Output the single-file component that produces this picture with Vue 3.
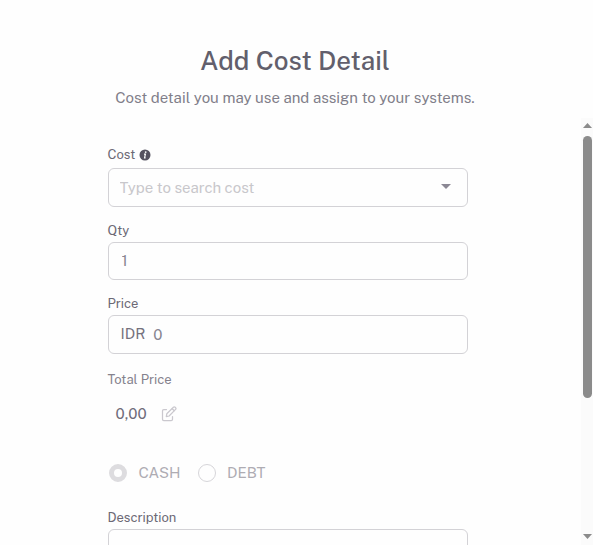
<template>
    <div class="modal">
        <header class="modal-header">
            <h3 class="title">Add Cost Detail</h3>
            <p class="subtitle">Cost detail you may use and assign to your systems.</p>
        </header>

        <div class="modal-body">
            <form class="form" @submit.prevent>
                <label class="label label-cost">
                    <span>Cost</span>
                    <svg class="info" viewBox="0 0 12 12">
                        <circle cx="6" cy="6" r="5.5" fill="#55515f" />
                        <circle cx="6.7" cy="3.1" r="0.9" fill="#fff" />
                        <path d="M5 5.2h1.4L5.6 8.9h1" fill="none" stroke="#fff" stroke-width="1.2" />
                    </svg>
                </label>
                <div class="control select">
                    <input v-model="cost" class="input" type="text" placeholder="Type to search cost" />
                    <svg class="caret" viewBox="0 0 10 5"><path d="M0 0h10L5 5z" fill="#8b8894" /></svg>
                </div>

                <label class="label label-qty">Qty</label>
                <div class="control qty">
                    <input v-model="qty" class="input" type="text" />
                </div>

                <label class="label label-price">Price</label>
                <div class="control price">
                    <span class="currency">IDR</span>
                    <input v-model="price" class="input" type="text" />
                </div>

                <label class="label label-total">Total Price</label>
                <div class="total">
                    <span>0,00</span>
                    <svg class="edit" viewBox="0 0 16 16" fill="none" stroke="#cac8ce" stroke-width="1.25" stroke-linejoin="round" stroke-linecap="round">
                        <path d="M5.5 3.5H2.8Q1.5 3.5 1.5 4.8v8.4q0 1.3 1.3 1.3h7.4q1.3 0 1.3-1.3V10.5" />
                        <path d="M5.3 10.7l.5-2.9 6.6-6.5q.9-.8 1.8 0l.4.4q.8.9 0 1.7L8.1 10z" />
                        <path d="M11.2 2.7l2.1 2" />
                    </svg>
                </div>

                <div class="payment">
                    <label v-for="item in methods" :key="item" class="option">
                        <span class="radio" :class="{ checked: item === method }"></span>
                        <span class="option-text">{{ item }}</span>
                    </label>
                </div>

                <label class="label label-description">Description</label>
                <textarea class="control description"></textarea>
            </form>

            <div class="scrollbar">
                <svg class="arrow" viewBox="0 0 9 5"><path d="M0 5h9L4.5 0z" fill="#8b8b8b" /></svg>
                <div class="thumb"></div>
                <svg class="arrow arrow-down" viewBox="0 0 9 5"><path d="M0 0h9L4.5 5z" fill="#8b8b8b" /></svg>
            </div>
        </div>
    </div>
</template>

<script setup>
import { ref } from 'vue';

const cost = ref('');
const qty = ref('1');
const price = ref('0');
const methods = ['CASH', 'DEBT'];
const method = ref('CASH');
</script>

<style>
body {
    background: #fefefe;
    overflow: hidden;
}
</style>

<style scoped>
* {
    box-sizing: border-box;
}

.modal {
    display: flex;
    flex-direction: column;
    height: 545px;
    overflow: hidden;
    font-family: "Public Sans", Inter, "Liberation Sans", sans-serif;
    font-size: 15px;
    color: #6f6c7a;
}

.modal-header {
    width: 590px;
    height: 118px;
    padding-top: 43px;
    text-align: center;
    flex-shrink: 0;
}

.title {
    margin: 0;
    font-size: 26px;
    font-weight: 500;
    line-height: 36px;
    color: #625f6c;
    white-space: nowrap;
}

.subtitle {
    margin: 8px 0 0;
    line-height: 22px;
    color: #817e8a;
    white-space: nowrap;
}

.modal-body {
    display: flex;
    justify-content: space-between;
    height: 427px;
}

.form {
    display: flex;
    flex-direction: column;
    width: 360px;
    margin-left: 107.5px;
}

.label {
    display: flex;
    align-items: center;
    height: 20px;
    flex-shrink: 0;
    font-size: 13px;
    line-height: 20px;
    color: #6c6975;
}

.label-cost {
    margin-top: 27px;
    margin-bottom: 3px;
    gap: 4px;
}

.info {
    width: 12px;
    height: 12px;
}

.label-qty {
    margin: 14px 0 1px;
}

.label-price {
    margin: 14px 0 1px;
}

.label-total {
    margin: 16px 0 0;
    color: #85828d;
}

.label-description {
    margin: 25px 0 1px;
}

.control {
    display: flex;
    align-items: center;
    width: 360px;
    height: 39px;
    flex-shrink: 0;
    border: 1px solid #d3d2d6;
    border-radius: 6px;
    background: #fefefe;
}

.input {
    flex: 1;
    min-width: 0;
    padding: 0;
    border: 0;
    outline: 0;
    background: transparent;
    font: inherit;
    line-height: 22px;
    color: #898691;
}

.input::placeholder {
    color: #c8c7cb;
    opacity: 1;
}

.select {
    padding: 0 16px 0 11px;
}

.caret {
    width: 10px;
    height: 5px;
    margin-bottom: 2px;
}

.qty {
    height: 38px;
    padding: 0 13px;
}

.price {
    gap: 8px;
    padding: 0 12px;
}

.currency {
    height: 23px;
    line-height: 21px;
    color: #74717d;
}

.total {
    display: flex;
    align-items: center;
    gap: 14px;
    height: 18px;
    flex-shrink: 0;
    margin-top: 15px;
    padding-left: 8px;
    line-height: 18px;
}

.edit {
    width: 16px;
    height: 16px;
}

.payment {
    display: flex;
    gap: 17px;
    height: 20px;
    flex-shrink: 0;
    margin-top: 40px;
    padding-left: 1.5px;
}

.option {
    display: flex;
    align-items: center;
    gap: 11.5px;
    line-height: 18px;
    color: #aeacb3;
}

.option-text {
    padding-bottom: 1px;
}

.radio {
    width: 18px;
    height: 18px;
    border: 1px solid #d6d5d9;
    border-radius: 50%;
}

.radio.checked {
    border: 5px solid #dddcdf;
}

.description {
    height: 90px;
    resize: none;
    outline: 0;
}

.scrollbar {
    display: flex;
    flex-direction: column;
    align-items: center;
    width: 12px;
    padding: 5px 0 6px;
    background: #fbfbfb;
}

.arrow {
    width: 9px;
    height: 5px;
}

.arrow-down {
    margin-top: auto;
}

.thumb {
    width: 9px;
    height: 262px;
    margin-top: 8px;
    border-radius: 5px;
    background: #8b8b8b;
}
</style>
